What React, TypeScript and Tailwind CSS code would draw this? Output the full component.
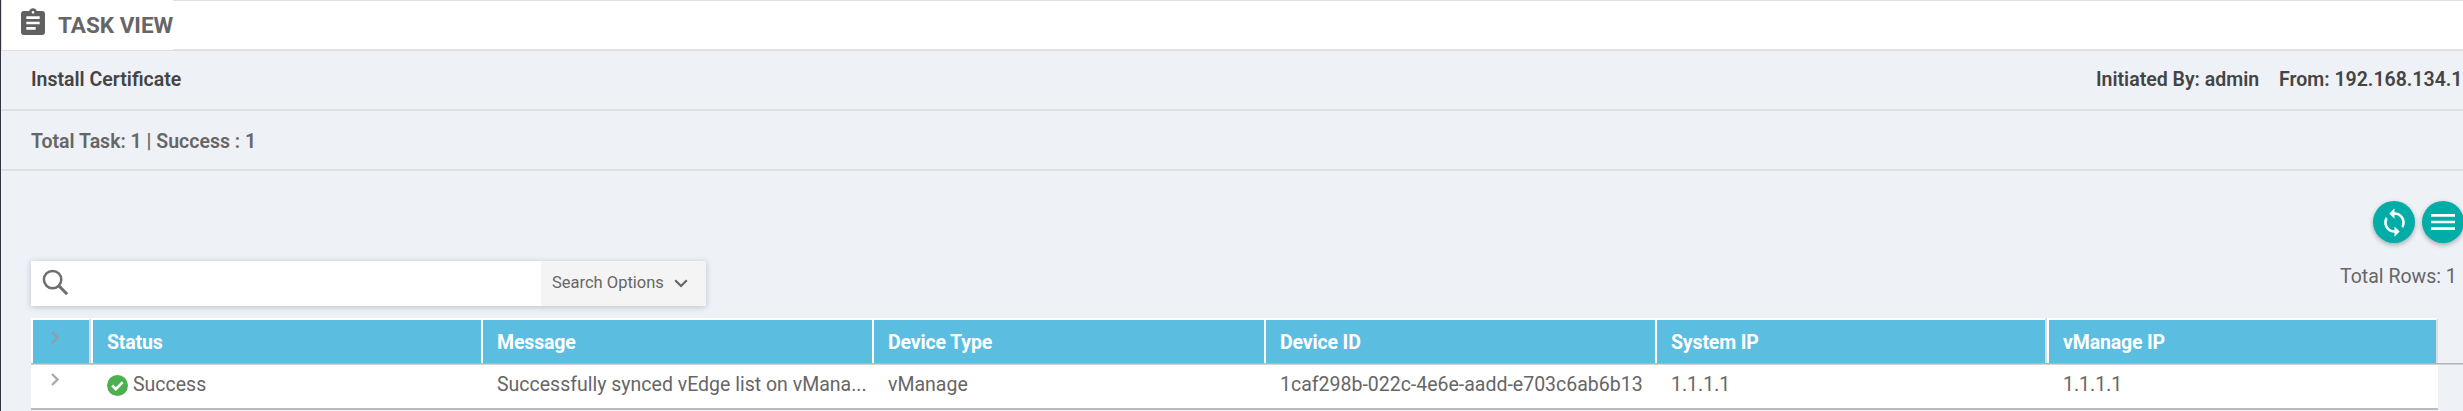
import React from "react";
import { MdAssignment, MdSync, MdMenu } from "react-icons/md";

const columns = [
  { label: "Status", cell: "w-[390px] border-l-2" },
  { label: "Message", cell: "w-[391px] border-l-2" },
  { label: "Device Type", cell: "w-[392px] border-l-2" },
  { label: "Device ID", cell: "w-[391px] border-l-2" },
  { label: "System IP", cell: "w-[390px] border-l-2" },
];

const values = [
  { text: "Successfully synced vEdge list on vMana...", cell: "w-[391px]" },
  { text: "vManage", cell: "w-[392px]" },
  { text: "1caf298b-022c-4e6e-aadd-e703c6ab6b13", cell: "w-[391px]" },
  { text: "1.1.1.1", cell: "w-[392px]" },
  { text: "1.1.1.1", cell: "w-[391px]" },
];

function Chevron({ className }: { className: string }) {
  return (
    <svg viewBox="0 0 8 13" className={className} fill="none" stroke="currentColor" strokeWidth="2.4">
      <path d="M1 1l5.5 5.5L1 12" />
    </svg>
  );
}

export default function App() {
  return (
    <div className="flex h-[411px] w-[2463px] flex-col overflow-hidden whitespace-nowrap border-l border-[#33333f] bg-[#eef1f6] font-['Roboto',sans-serif] text-[19.5px] leading-6 text-[#666666]">
      <header className="flex h-[51px] shrink-0 bg-white">
        <div className="flex w-[172px] border-b border-l border-[#e0e0e0] pl-[15px]">
          <MdAssignment className="mt-[7px] size-[32px] shrink-0 text-[#606060]" />
          <span className="ml-[9px] mt-[13px] text-[22.5px] font-bold">TASK VIEW</span>
        </div>
        <div className="h-[51px] flex-1 border-b-2 border-t border-[#e0e0e0]" />
      </header>
      <section className="flex h-[60px] shrink-0 justify-between border-b-2 border-[#e0e0e0] pl-[30px] pt-[17px] font-semibold text-[#444444]">
        <span>Install Certificate</span>
        <div className="flex w-[367px] gap-[20px]">
          <span>Initiated By: admin</span>
          <span>From: 192.168.134.1</span>
        </div>
      </section>
      <section className="h-[60px] shrink-0 border-b-2 border-[#e0e0e0] pl-[30px] pt-[19px] font-semibold">
        Total Task: 1 | Success : 1
      </section>
      <div className="flex h-[147px] shrink-0 justify-between pl-[30px]">
        <div className="mt-[90px] flex h-[45px] w-[675px] bg-white shadow-[0_1px_6px_rgba(60,70,90,0.28)]">
          <svg viewBox="0 0 27 27" className="ml-[11px] mt-[8px] size-[27px]" fill="none" stroke="#6f6f6f">
            <circle cx="10.6" cy="10.6" r="8.7" strokeWidth="2.5" />
            <path d="M16.9 16.9l8.3 8.3" strokeWidth="3" />
          </svg>
          <div className="ml-auto flex w-[165px] bg-[#f4f4f4] pl-[11px] pt-[10px] text-[16.5px]">
            <span>Search Options</span>
            <svg viewBox="0 0 14 9" className="ml-[10px] mt-[8px] h-[9px] w-[14px]" fill="none" stroke="currentColor" strokeWidth="2.2">
              <path d="M1.2 1.2l5.8 5.8 5.8-5.8" />
            </svg>
          </div>
        </div>
        <div className="flex w-[124px] shrink-0 flex-col">
          <div className="mt-[30px] flex gap-[7px] pl-[34px]">
            <span className="flex size-[42px] shrink-0 items-center justify-center rounded-full bg-[#03ada7] text-white shadow-[0_2px_5px_rgba(0,0,0,0.3)]">
              <MdSync className="size-[31px]" />
            </span>
            <span className="flex size-[42px] shrink-0 items-center justify-center rounded-full bg-[#03ada7] text-white shadow-[0_2px_5px_rgba(0,0,0,0.3)]">
              <MdMenu className="size-[32px]" />
            </span>
          </div>
          <span className="mt-[22px] pl-px">Total Rows: 1</span>
        </div>
      </div>
      <div className="flex h-[45px] shrink-0 pl-[30px] font-bold text-white">
        <div className="flex w-[60px] border-2 border-b-0 border-white border-r-[#dddddd] bg-[#5bbddf] pl-[18px] pt-[11px] text-[#8f9fa6]">
          <Chevron className="h-[13px] w-[8px] shrink-0" />
        </div>
        {columns.map((c) => (
          <div key={c.label} className={`${c.cell} border-t-2 border-white bg-[#5bbddf] pl-[14px] pt-[11px] tracking-[-0.15px]`}>
            {c.label}
          </div>
        ))}
        <div className="w-[2px] bg-[#dddddd]" />
        <div className="w-[391px] border-2 border-b-0 border-white border-r-[#dddddd] bg-[#5bbddf] pl-[14px] pt-[11px] tracking-[-0.15px]">vManage IP</div>
      </div>
      <div className="ml-[30px] h-[2px] shrink-0 border-b border-t border-b-[#cfd2d6] border-t-[#b0b3b8]" />
      <div className="ml-[30px] flex h-[45px] w-[2407px] shrink-0 border-b-2 border-[#bbbbbb] bg-white pt-[8px]">
        <div className="w-[60px] pl-[20px] text-[#aaaaaa]">
          <Chevron className="h-[13px] w-[8px]" />
        </div>
        <div className="flex w-[390px] pl-[16px]">
          <svg viewBox="0 0 21 21" className="mt-[2px] size-[21px]">
            <circle cx="10.5" cy="10.5" r="10.5" fill="#4caf50" />
            <path d="M5.2 10.5l3.6 3.6 6.9-6.9" fill="none" stroke="#fff" strokeWidth="2.6" />
          </svg>
          <span className="ml-[5px]">Success</span>
        </div>
        {values.map((v, i) => (
          <div key={i} className={`${v.cell} shrink-0 pl-[16px]`}>{v.text}</div>
        ))}
      </div>
    </div>
  );
}
